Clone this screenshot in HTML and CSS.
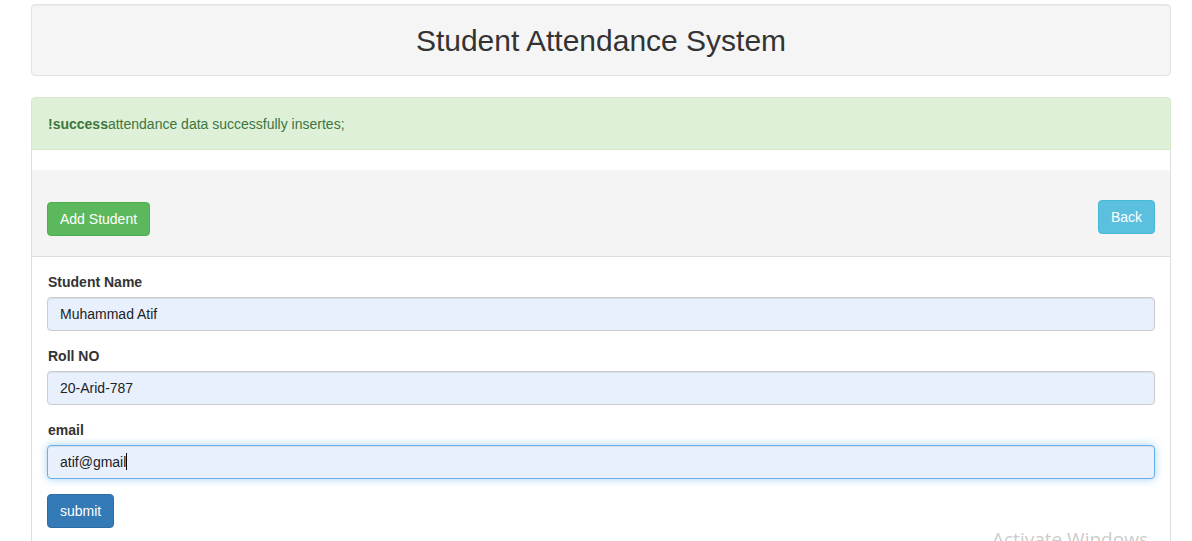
FILE: index.html
```html
<!DOCTYPE html>
<html>
<head>
<meta charset="utf-8">
<title>Student Attendance System</title>
<link rel="stylesheet" href="styles.css">
</head>
<body>
<div class="container">
  <div class="well">
    <h1 class="title">Student Attendance System</h1>
  </div>
  <div class="alert"><strong>!success</strong>attendance data successfully insertes;</div>
  <div class="panel">
    <div class="panel-heading">
      <button class="btn btn-success btn-add">Add Student</button>
      <button class="btn btn-info">Back</button>
    </div>
    <div class="panel-body">
      <div class="form-group">
        <label class="label">Student Name</label>
        <div class="input">Muhammad Atif</div>
      </div>
      <div class="form-group">
        <label class="label">Roll NO</label>
        <div class="input">20-Arid-787</div>
      </div>
      <div class="form-group">
        <label class="label">email</label>
        <div class="input input-focus">atif@gmail<span class="caret"></span></div>
      </div>
      <button class="btn btn-primary">submit</button>
    </div>
  </div>
</div>
<div class="watermark">Activate Windows</div>
</body>
</html>
```
FILE: styles.css
```css
html, body {
  margin: 0;
  padding: 0;
  background: #fff;
  overflow: hidden;
}
body {
  font-family: "Liberation Sans", Arial, Helvetica, sans-serif;
  font-size: 14px;
  line-height: 20px;
  color: #333;
}
.container {
  width: 1140px;
  margin-left: 31px;
  padding-top: 4px;
}
.well {
  background: #f5f5f5;
  border: 1px solid #e3e3e3;
  border-radius: 4px;
  height: 70px;
  display: flex;
  align-items: center;
  justify-content: center;
  box-shadow: inset 0 1px 1px rgba(0,0,0,0.05);
}
.title {
  margin: 2px 0 0;
  font-size: 30px;
  font-weight: 400;
  line-height: 34px;
  color: #333;
}
.alert {
  margin-top: 21px;
  background: #dff0d8;
  border: 1px solid #d6e9c6;
  border-radius: 4px 4px 0 0;
  color: #3c763d;
  padding: 16px 15px 15px 16px;
}
.alert strong {
  font-weight: 700;
}
.panel {
  border-left: 1px solid #ddd;
  border-right: 1px solid #ddd;
  padding-top: 20px;
  height: 400px;
}
.panel-heading {
  background: #f4f4f4;
  border-bottom: 1px solid #ddd;
  border-radius: 3px 3px 0 0;
  padding: 30px 15px 20px;
  display: flex;
  justify-content: space-between;
  align-items: flex-start;
}
.btn {
  font-family: "Liberation Sans", Arial, Helvetica, sans-serif;
  font-size: 14px;
  line-height: 20px;
  padding: 6px 12px;
  border: 1px solid transparent;
  border-radius: 4px;
  color: #fff;
  cursor: pointer;
}
.btn-add {
  margin-top: 2px;
}
.btn-success {
  background: #5cb85c;
  border-color: #4cae4c;
}
.btn-info {
  background: #5bc0de;
  border-color: #46b8da;
}
.btn-primary {
  background: #337ab7;
  border-color: #2e6da4;
}
.panel-body {
  padding: 15px;
}
.form-group {
  margin-bottom: 15px;
}
.label {
  display: block;
  font-weight: 700;
  margin-bottom: 5px;
  padding-left: 1px;
}
.input {
  height: 34px;
  box-sizing: border-box;
  padding: 6px 12px;
  background: #e8f0fe;
  border: 1px solid #ccc;
  border-radius: 4px;
  color: #222;
  box-shadow: inset 0 1px 1px rgba(0,0,0,0.075);
}
.input-focus {
  border-color: #66afe9;
  box-shadow: inset 0 1px 1px rgba(0,0,0,0.075), 0 0 8px rgba(102,175,233,0.6);
}
.caret {
  display: inline-block;
  width: 1px;
  height: 17px;
  background: #000;
  vertical-align: -3px;
}
.watermark {
  position: absolute;
  left: 992px;
  top: 529px;
  font-family: "Open Sans", "DejaVu Sans", sans-serif;
  font-size: 19px;
  color: rgba(120,120,120,0.4);
  white-space: nowrap;
}
```
